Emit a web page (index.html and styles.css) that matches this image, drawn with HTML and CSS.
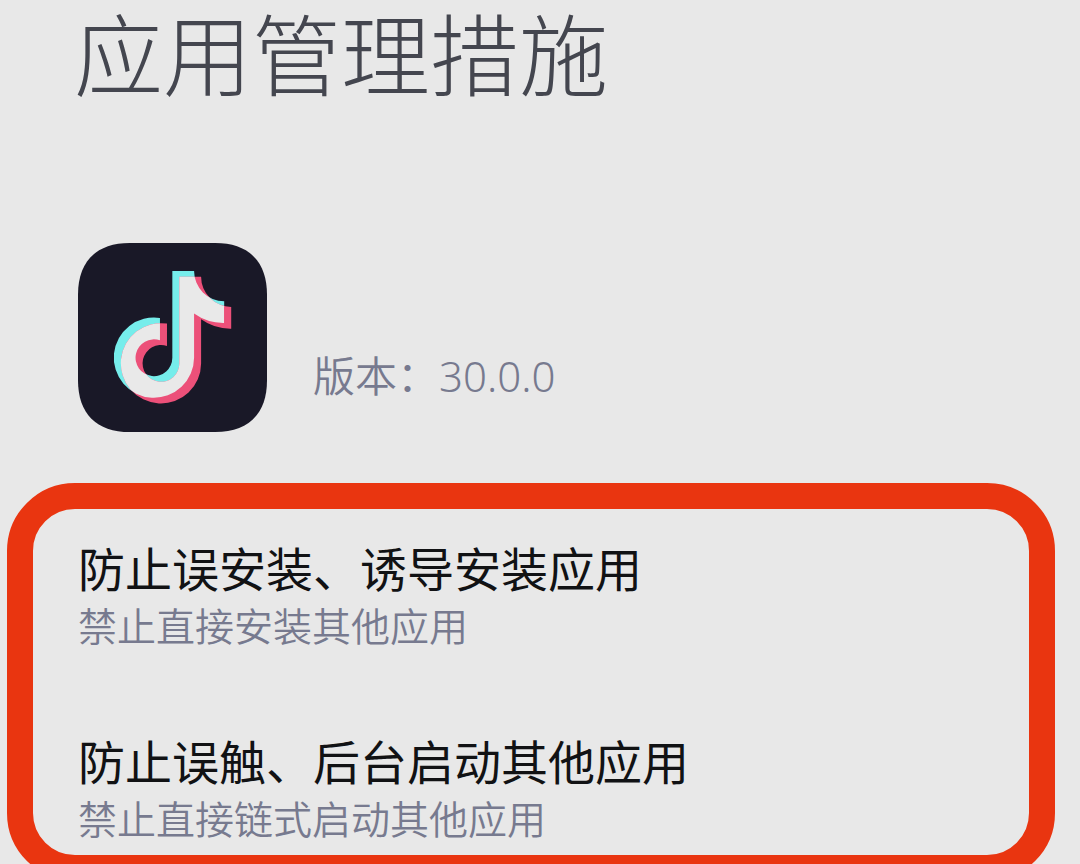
FILE: index.html
```
<!DOCTYPE html>
<html lang="zh-CN">
<head>
  <meta charset="UTF-8">
  <meta name="viewport" content="width=device-width, initial-scale=1.0">
  <title>应用管理措施</title>
  <link rel="stylesheet" href="styles.css">
</head>
<body>
  <main>
    <h1>应用管理措施</h1>

    <div class="app-info">
      <svg class="app-icon" viewBox="25 25 565 565" role="img" aria-label="抖音">
        <defs>
          <path id="note" d="M307 109H372A90 90 0 0 0 462 199V264A150 150 0 0 1 372 236V368A120 120 0 1 1 270 249V316A55 55 0 1 0 307 368Z"/>
          <clipPath id="overlap"><use href="#note"/></clipPath>
        </defs>
        <path fill="#191827" d="M180 25H435C535 25 590 80 590 180V435C590 535 535 590 435 590H180C80 590 25 535 25 435V180C25 80 80 25 180 25Z"/>
        <use href="#note" fill="#76edeb"/>
        <use href="#note" x="21" y="17" fill="#ec5079"/>
        <g clip-path="url(#overlap)">
          <use href="#note" x="21" y="17" fill="#e9e9e9"/>
        </g>
      </svg>
      <p class="version">版本：30.0.0</p>
    </div>

    <section class="measures">
      <div class="measure">
        <h2>防止误安装、诱导安装应用</h2>
        <p>禁止直接安装其他应用</p>
      </div>
      <div class="measure">
        <h2>防止误触、后台启动其他应用</h2>
        <p>禁止直接链式启动其他应用</p>
      </div>
    </section>
  </main>
</body>
</html>
```
FILE: styles.css
```
* {
  box-sizing: border-box;
}

body {
  margin: 0;
  background-color: #e8e8e8;
  color: #111214;
  font-family: "Noto Sans CJK SC", sans-serif;
}

h1, h2, p {
  margin: 0;
}

h1 {
  padding: 0 74px;
  font-family: Roboto, "Noto Sans CJK SC", sans-serif;
  font-size: 89px;
  line-height: 118px;
  font-weight: 300;
  color: #44464f;
}

.app-info {
  display: flex;
  align-items: flex-end;
  gap: 46px;
  margin-top: 125px;
  padding: 0 78px;
}

.app-icon {
  display: block;
  width: 189px;
  height: 189px;
}

.version {
  padding-bottom: 26px;
  font-family: "Noto Sans", "Noto Sans CJK SC", sans-serif;
  font-size: 42px;
  line-height: 60px;
  font-weight: 350;
  color: #777a8f;
}

.measures {
  display: flex;
  flex-direction: column;
  gap: 78px;
  margin: 51px 25px 0 7px;
  padding: 26px 45px 12px;
  border: 26px solid #e93510;
  border-radius: 68px;
}

h2 {
  font-size: 47px;
  line-height: 63px;
  font-weight: 400;
}

.measure p {
  font-size: 39px;
  line-height: 52px;
  font-weight: 350;
  color: #777a8f;
}
```
